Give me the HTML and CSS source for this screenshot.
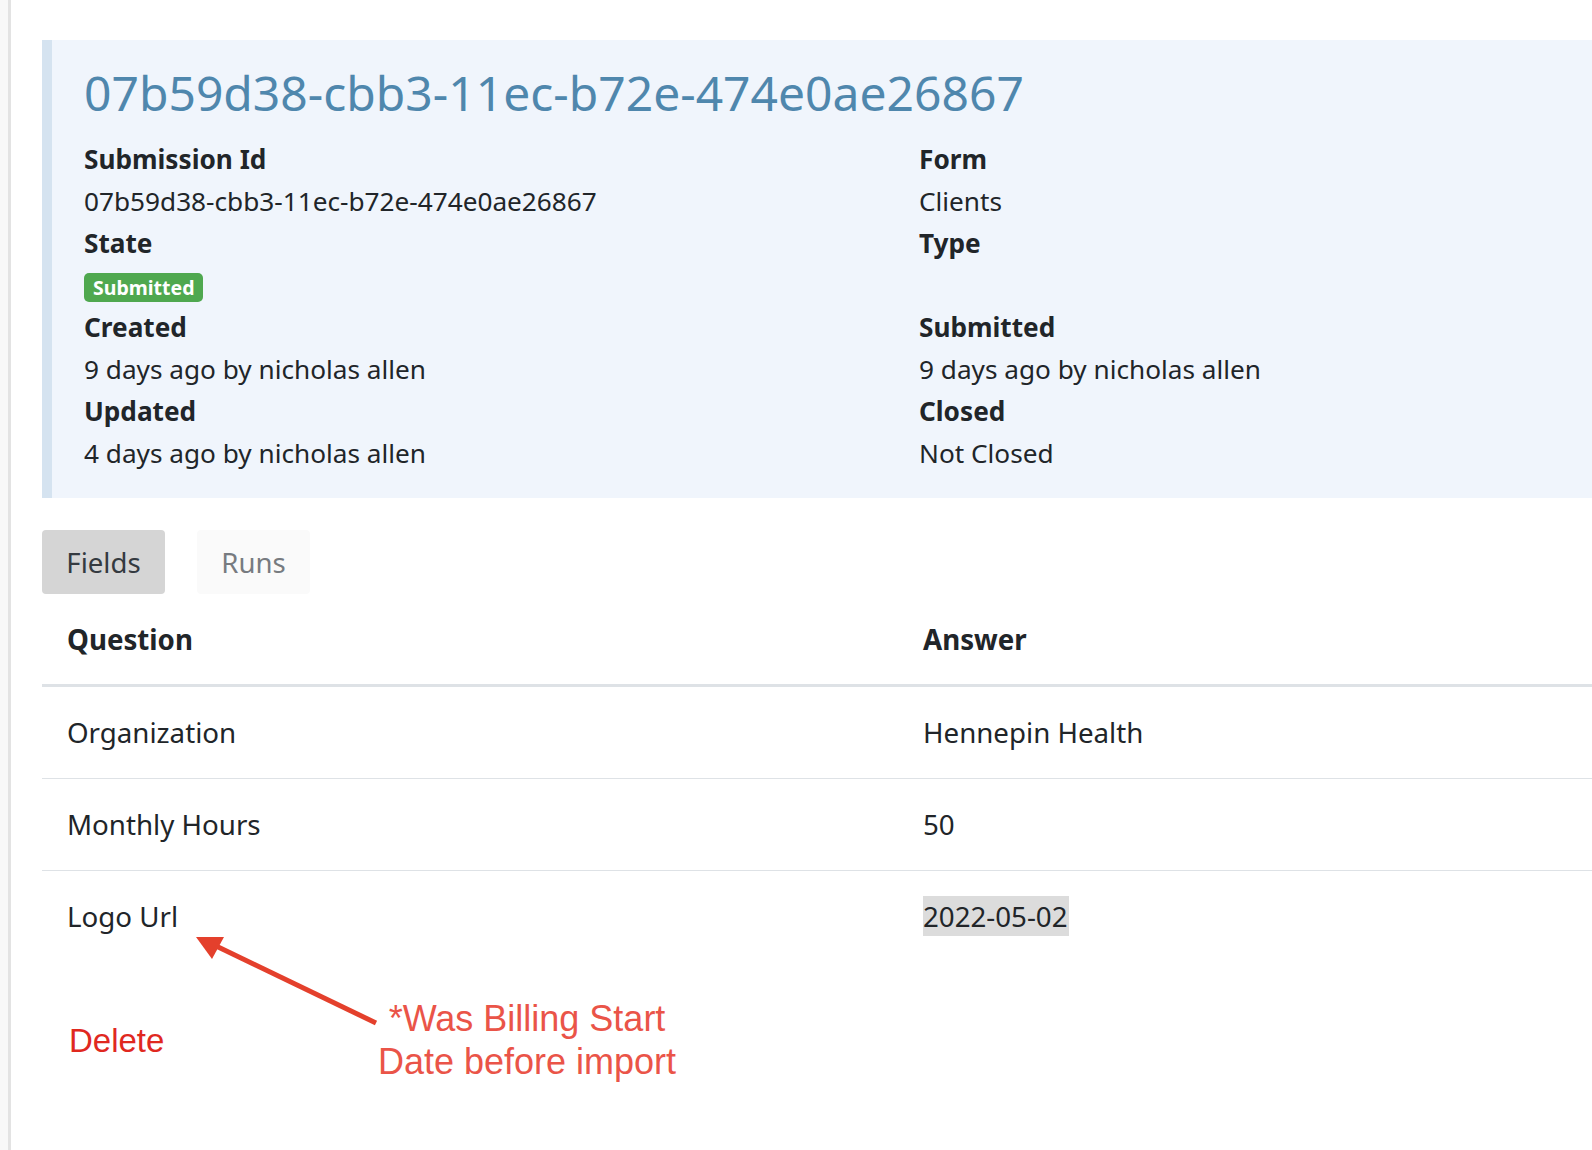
FILE: index.html
```html
<!DOCTYPE html>
<html lang="en">
<head>
<meta charset="utf-8">
<title>Submission 07b59d38-cbb3-11ec-b72e-474e0ae26867</title>
<link rel="stylesheet" href="styles.css">
</head>
<body>
<div class="page">
  <aside class="rail"></aside>
  <main class="main">
    <section class="summary">
      <h1 class="title">07b59d38-cbb3-11ec-b72e-474e0ae26867</h1>
      <div class="meta">
        <dl class="col">
          <dt>Submission Id</dt>
          <dd>07b59d38-cbb3-11ec-b72e-474e0ae26867</dd>
          <dt>State</dt>
          <dd class="badge-line"><span class="badge">Submitted</span></dd>
          <dt>Created</dt>
          <dd>9 days ago by nicholas allen</dd>
          <dt>Updated</dt>
          <dd>4 days ago by nicholas allen</dd>
        </dl>
        <dl class="col">
          <dt>Form</dt>
          <dd>Clients</dd>
          <dt>Type</dt>
          <dd></dd>
          <dt>Submitted</dt>
          <dd>9 days ago by nicholas allen</dd>
          <dt>Closed</dt>
          <dd>Not Closed</dd>
        </dl>
      </div>
    </section>

    <nav class="tabs">
      <button class="tab tab-active">Fields</button>
      <button class="tab">Runs</button>
    </nav>

    <table class="fields">
      <colgroup><col class="col-q"><col class="col-a"></colgroup>
      <thead>
        <tr><th>Question</th><th>Answer</th></tr>
      </thead>
      <tbody>
        <tr><td>Organization</td><td>Hennepin Health</td></tr>
        <tr><td>Monthly Hours</td><td>50</td></tr>
        <tr class="last"><td>Logo Url</td><td><span class="selected">2022-05-02</span></td></tr>
      </tbody>
    </table>

    <div class="delete">Delete</div>
  </main>

  <svg class="arrow" width="400" height="200" viewBox="0 0 400 200" aria-hidden="true">
    <line x1="376" y1="123" x2="214" y2="45" stroke="#e4402c" stroke-width="5" stroke-linecap="butt"/>
    <polygon points="196,37 224,37 212,59" fill="#e4402c"/>
  </svg>
  <div class="note">*Was Billing Start<br>Date before import</div>
</div>
</body>
</html>
```

FILE: styles.css
```css
* { box-sizing: border-box; }

html, body {
  margin: 0;
  padding: 0;
  background: #ffffff;
  overflow: hidden;
}

body {
  font-family: "Noto Sans", "Open Sans", sans-serif;
  color: #212529;
  font-size: 26px;
}

.page {
  position: relative;
  display: flex;
  min-height: 1150px;
  width: 1592px;
}

.rail {
  flex: 0 0 11px;
  background: #f8f8f8;
  border-right: 3px solid #e3e3e3;
}

.main {
  flex: 1;
  min-width: 0;
  padding: 40px 0 0 31px;
}

.summary {
  background: #f0f5fc;
  border-left: 10px solid #d5e3f0;
  padding: 22px 0 24px 32px;
}

.title {
  margin: 0 0 14px 0;
  font-size: 48px;
  line-height: 62px;
  font-weight: 400;
  color: #4f87ad;
  white-space: nowrap;
}

.meta {
  display: grid;
  grid-template-columns: 835px 1fr;
  font-size: 26.2px;
}

.col {
  margin: 0;
}

.col dt {
  font-weight: 700;
  line-height: 42px;
  height: 42px;
}

.col dd {
  margin: 0;
  line-height: 42px;
  height: 42px;
  white-space: nowrap;
}

.col dd.badge-line {
  display: flex;
  align-items: flex-start;
  padding-top: 9px;
}

.badge {
  display: inline-block;
  background: #4fa84f;
  color: #ffffff;
  font-weight: 700;
  font-size: 19.5px;
  line-height: 29px;
  height: 29px;
  padding: 0 9px;
  border-radius: 5px;
}

.tabs {
  display: flex;
  gap: 32px;
  margin-top: 32px;
}

.tab {
  font-family: inherit;
  font-size: 27.6px;
  line-height: 64px;
  height: 64px;
  border: none;
  border-radius: 4px;
  padding: 0;
  background: #fafafa;
  color: #777b80;
  cursor: pointer;
  width: 113px;
}

.tab-active {
  background: #d5d5d5;
  color: #343a40;
  width: 123px;
}

.fields {
  width: 100%;
  border-collapse: collapse;
  table-layout: fixed;
  font-size: 27.7px;
}

.col-q { width: 856px; }

.fields th {
  text-align: left;
  font-weight: 700;
  padding: 24px 25px;
  line-height: 42px;
  border-bottom: 3px solid #dee2e6;
}

.fields td {
  padding: 24px 25px;
  line-height: 43px;
  border-bottom: 1px solid #dee2e6;
  white-space: nowrap;
}

.fields tr.last td {
  border-bottom: none;
}

.selected {
  background: #dcdcdc;
  padding: 1px 1px 1px 0;
}

.delete {
  margin: 59px 0 0 27px;
  font-family: "Liberation Sans", Arial, sans-serif;
  font-size: 33px;
  line-height: 40px;
  color: #e0281f;
}

.arrow {
  position: absolute;
  left: 0;
  top: 900px;
}

.note {
  position: absolute;
  left: 350px;
  top: 997px;
  width: 354px;
  text-align: center;
  font-family: "Liberation Sans", Arial, sans-serif;
  font-size: 36px;
  line-height: 43px;
  color: #ea5448;
}
```
